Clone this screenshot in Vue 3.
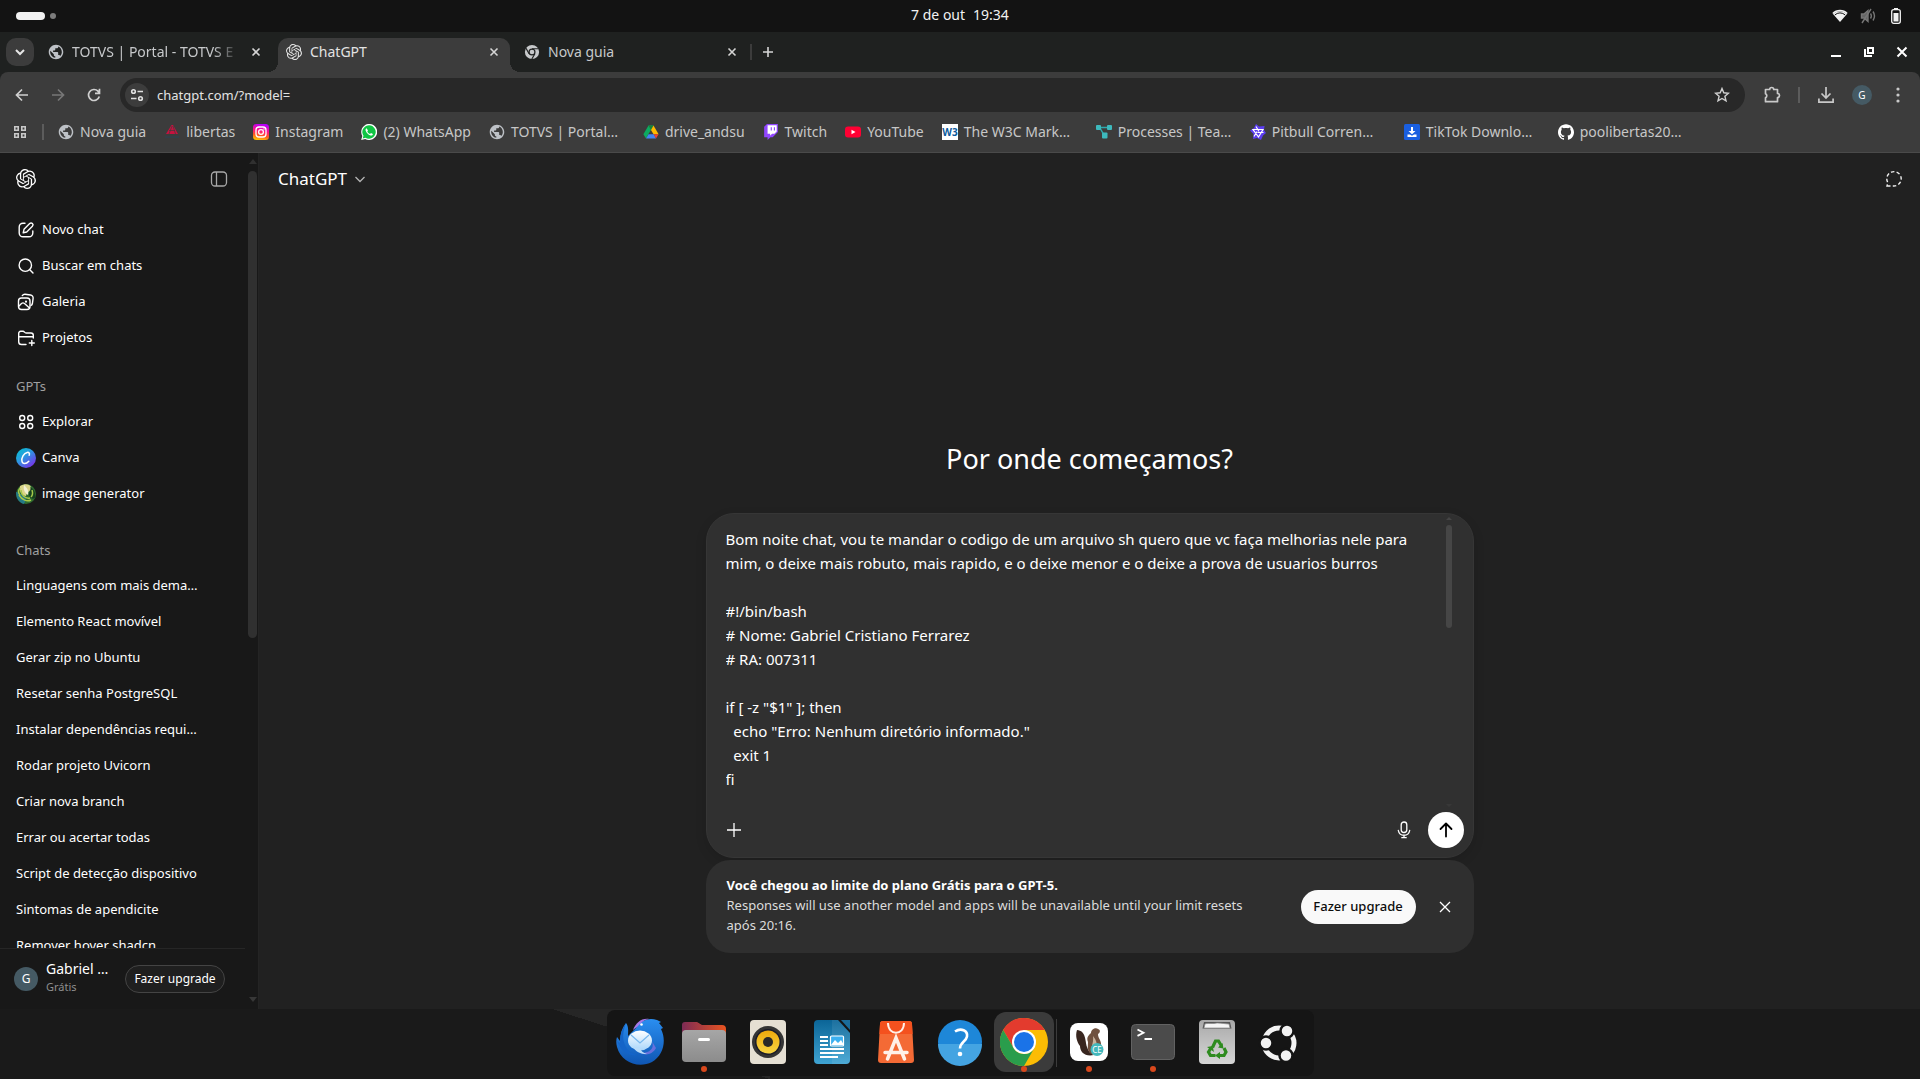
<script setup>
import { ref } from 'vue'

const tabs = [
  { title: 'TOTVS | Portal - TOTVS E', icon: 'globe', cls: 'faded' },
  { title: 'ChatGPT', icon: 'openai', cls: 'active' },
  { title: 'Nova guia', icon: 'chrome-mono', cls: '' },
]

const bookmarks = [
  { title: 'Nova guia', icon: 'globe' },
  { title: 'libertas', icon: 'libertas' },
  { title: 'Instagram', icon: 'instagram' },
  { title: '(2) WhatsApp', icon: 'whatsapp' },
  { title: 'TOTVS | Portal…', icon: 'globe', long: true },
  { title: 'drive_andsu', icon: 'drive' },
  { title: 'Twitch', icon: 'twitch' },
  { title: 'YouTube', icon: 'youtube' },
  { title: 'The W3C Mark…', icon: 'w3', long: true },
  { title: 'Processes | Tea…', icon: 'processes', long: true },
  { title: 'Pitbull Corren…', icon: 'pitbull', long: true },
  { title: 'TikTok Downlo…', icon: 'tiktok', long: true },
  { title: 'poolibertas20…', icon: 'github', long: true },
]

const navItems = [
  { label: 'Novo chat', icon: 'edit' },
  { label: 'Buscar em chats', icon: 'search' },
  { label: 'Galeria', icon: 'gallery' },
  { label: 'Projetos', icon: 'folder-plus' },
]

const gpts = [
  { label: 'Explorar', icon: 'explore' },
  { label: 'Canva', icon: 'canva' },
  { label: 'image generator', icon: 'imagegen' },
]

const chats = [
  'Linguagens com mais dema…',
  'Elemento React movível',
  'Gerar zip no Ubuntu',
  'Resetar senha PostgreSQL',
  'Instalar dependências requi…',
  'Rodar projeto Uvicorn',
  'Criar nova branch',
  'Errar ou acertar todas',
  'Script de detecção dispositivo',
  'Sintomas de apendicite',
  'Remover hover shadcn',
]

const dockLeft = [
  { name: 'Thunderbird', icon: 'thunderbird' },
  { name: 'Arquivos', icon: 'files', running: true },
  { name: 'Rhythmbox', icon: 'rhythmbox' },
  { name: 'LibreOffice Writer', icon: 'writer' },
  { name: 'Central de aplicativos', icon: 'appcenter' },
  { name: 'Ajuda', icon: 'help' },
  { name: 'Google Chrome', icon: 'chrome', running: true, focused: true },
]
const dockRight = [
  { name: 'DBeaver', icon: 'dbeaver', running: true },
  { name: 'Terminal', icon: 'terminal', running: true },
  { name: 'Lixeira', icon: 'trash' },
  { name: 'Mostrar aplicativos', icon: 'ubuntu' },
]

const url = ref('chatgpt.com/?model=')
const prompt = ref(`Bom noite chat, vou te mandar o codigo de um arquivo sh quero que vc faça melhorias nele para mim, o deixe mais robuto, mais rapido, e o deixe menor e o deixe a prova de usuarios burros

#!/bin/bash
# Nome: Gabriel Cristiano Ferrarez
# RA: 007311

if [ -z "$1" ]; then
  echo "Erro: Nenhum diretório informado."
  exit 1
fi`)
</script>

<template>
  <div class="screen">
    <svg class="sprite" width="0" height="0" aria-hidden="true">
      <defs>
        <linearGradient id="g-insta" x1=".3" y1="1" x2=".5" y2="0">
          <stop offset="0" stop-color="#ffc800" /><stop offset=".3" stop-color="#ff5a1f" />
          <stop offset=".6" stop-color="#ff0f8a" /><stop offset="1" stop-color="#b400ff" />
        </linearGradient>
        <linearGradient id="g-canva" x1="0" y1="0" x2=".8" y2="1">
          <stop offset="0" stop-color="#00c4cc" /><stop offset=".45" stop-color="#2a9be0" /><stop offset="1" stop-color="#7d2ae8" />
        </linearGradient>
        <linearGradient id="g-bird" x1="0" y1="0" x2="0" y2="1">
          <stop offset="0" stop-color="#2a8ef0" /><stop offset="1" stop-color="#0f56b3" />
        </linearGradient>
        <linearGradient id="g-mail" x1="0" y1="0" x2="0" y2="1">
          <stop offset="0" stop-color="#ffffff" /><stop offset="1" stop-color="#a9d6fb" />
        </linearGradient>
        <linearGradient id="g-folder" x1="0" y1="0" x2="1" y2="0">
          <stop offset="0" stop-color="#7d2b55" /><stop offset="1" stop-color="#e95420" />
        </linearGradient>
        <linearGradient id="g-gray" x1="0" y1="0" x2="0" y2="1">
          <stop offset="0" stop-color="#a6a6a6" /><stop offset="1" stop-color="#8c8c8c" />
        </linearGradient>
        <linearGradient id="g-yellow" x1="0" y1="0" x2="0" y2="1">
          <stop offset="0" stop-color="#eda90c" /><stop offset="1" stop-color="#f7d442" />
        </linearGradient>
        <linearGradient id="g-writer" x1="0" y1="0" x2="0" y2="1">
          <stop offset="0" stop-color="#0b6597" /><stop offset="1" stop-color="#3fa4d3" />
        </linearGradient>
        <linearGradient id="g-trash" x1="0" y1="0" x2="0" y2="1">
          <stop offset="0" stop-color="#a9a9a9" /><stop offset="1" stop-color="#d6d6d6" />
        </linearGradient>
      </defs>

      <!-- browser -->
      <symbol id="globe" viewBox="1 1 22 22"><path fill="#bdc1c6" d="M12 2C6.480 2 2 6.480 2 12s4.480 10 10 10 10-4.480 10-10S17.520 2 12 2zm-1 17.930c-3.950-.49-7-3.850-7-7.930 0-.62.08-1.210.21-1.790L9 15v1c0 1.100.9 2 2 2v1.930zm6.900-2.540c-.26-.81-1-1.390-1.900-1.390h-1v-3c0-.55-.45-1-1-1H8v-2h2c.55 0 1-.45 1-1V7h2c1.100 0 2-.9 2-2v-.41c2.930 1.190 5 4.060 5 7.410 0 2.080-.8 3.970-2.100 5.390z" /></symbol>
      <symbol id="openai" viewBox="0 0 24 24"><path fill="currentColor" d="M22.2819 9.8211a5.9847 5.9847 0 0 0-.5157-4.9108 6.0462 6.0462 0 0 0-6.5098-2.9A6.0651 6.0651 0 0 0 4.9807 4.1818a5.9847 5.9847 0 0 0-3.9977 2.9 6.0462 6.0462 0 0 0 .7427 7.0966 5.98 5.98 0 0 0 .511 4.9107 6.051 6.051 0 0 0 6.5146 2.9001A5.9847 5.9847 0 0 0 13.2599 24a6.0557 6.0557 0 0 0 5.7718-4.2058 5.9894 5.9894 0 0 0 3.9977-2.9001 6.0557 6.0557 0 0 0-.7475-7.0729zm-9.022 12.6081a4.4755 4.4755 0 0 1-2.8764-1.0408l.1419-.0804 4.7783-2.7582a.7948.7948 0 0 0 .3927-.6813v-6.7369l2.02 1.1686a.071.071 0 0 1 .038.052v5.5826a4.504 4.504 0 0 1-4.4945 4.4944zm-9.6607-4.1254a4.4708 4.4708 0 0 1-.5346-3.0137l.142.0852 4.783 2.7582a.7712.7712 0 0 0 .7806 0l5.8428-3.3685v2.3324a.0804.0804 0 0 1-.0332.0615L9.74 19.9502a4.4992 4.4992 0 0 1-6.1408-1.6464zM2.3408 7.8956a4.485 4.485 0 0 1 2.3655-1.9728V11.6a.7664.7664 0 0 0 .3879.6765l5.8144 3.3543-2.0201 1.1685a.0757.0757 0 0 1-.071 0l-4.8303-2.7865A4.504 4.504 0 0 1 2.3408 7.872zm16.5963 3.8558L13.1038 8.364 15.1192 7.2a.0757.0757 0 0 1 .071 0l4.8303 2.7913a4.4944 4.4944 0 0 1-.6765 8.1042v-5.6772a.79.79 0 0 0-.407-.667zm2.0107-3.0231l-.142-.0852-4.7735-2.7818a.7759.7759 0 0 0-.7854 0L9.409 9.2297V6.8974a.0662.0662 0 0 1 .0284-.0615l4.8303-2.7866a4.4992 4.4992 0 0 1 6.6802 4.66zM8.3065 12.863l-2.02-1.1638a.0804.0804 0 0 1-.038-.0567V6.0742a4.4992 4.4992 0 0 1 7.3757-3.4537l-.142.0805L8.704 5.459a.7948.7948 0 0 0-.3927.6813zm1.0976-2.3654l2.602-1.4998 2.6069 1.4998v2.9994l-2.5974 1.4997-2.6067-1.4997Z" /></symbol>
      <symbol id="chrome-mono" viewBox="-1 -1 18 18"><circle cx="8" cy="8" r="8" fill="#c7c9cb" /><circle cx="8" cy="8" r="4" fill="#1f2120" /><circle cx="8" cy="8" r="2.600" fill="#c7c9cb" /><path d="M8 4.300h7.200M4.700 9.900 1.300 3.800M11.300 9.900 7.800 15.900" stroke="#1f2120" stroke-width="1.300" /></symbol>
      <symbol id="close" viewBox="0 0 16 16"><path d="m4.500 4.500 7 7m0-7-7 7" fill="none" stroke="currentColor" stroke-width="1.600" /></symbol>
      <symbol id="libertas" viewBox="0 0 16 16"><path d="M7.500 1 2 10h12L9 1z" fill="#c5123f" /><path d="m8 2-3 8M9 2l2.500 8M5 6.500h6" stroke="#3c3c3c" stroke-width=".7" /><path d="M1 12h14v2H1z" fill="#2c4350" opacity=".6" /></symbol>
      <symbol id="instagram" viewBox="0 0 16 16"><rect width="16" height="16" rx="3.500" fill="url(#g-insta)" /><rect x="3" y="3" width="10" height="10" rx="3" fill="none" stroke="#fff" stroke-width="1.300" /><circle cx="8" cy="8" r="2.400" fill="none" stroke="#fff" stroke-width="1.300" /><circle cx="11" cy="5" r=".7" fill="#fff" /></symbol>
      <symbol id="whatsapp" viewBox="0 0 16 16"><path d="M.2 16 1.300 12A8 8 0 1 1 4.200 14.900z" fill="#fff" /><path d="m1.700 14.500.8-2.700A6.700 6.700 0 1 1 4.500 13.700z" fill="#10c544" /><path d="M5.600 4.200c-.9.3-1.300 1.500-.9 2.600.7 2 2.400 3.900 4.800 4.700 1.200.3 2.200-.3 2.400-1.500l-1.900-1-1 .9c-1.400-.5-2.200-1.400-2.700-2.500l.7-.9z" fill="#fff" /></symbol>
      <symbol id="drive" viewBox="0 0 16 16"><path d="M5.500 1.500h5L5.800 9.600 3 14.500.4 10.200z" fill="#0da960" /><path d="M5.500 1.500h5L8 6z" fill="#188038" /><path d="M10.500 1.500 15.600 10.200H10.500L8 6z" fill="#ffba00" /><path d="M5.500 10.200h5.300L13 14.500H3z" fill="#4285f4" /><path d="M10.600 10.200h5L13 14.500z" fill="#ea4335" /></symbol>
      <symbol id="twitch" viewBox="0 0 24 24"><path d="M6 1h15v11l-4 4h-4l-3 3v-3H6z" fill="#fff" /><path fill="#9146ff" d="M11.571 4.714h1.715v5.143H11.570zm4.715 0H18v5.143h-1.714zM6 0L1.714 4.286v15.428h5.143V24l4.286-4.286h3.428L22.286 12V0zm14.571 11.143l-3.428 3.428h-3.429l-3 3v-3H6.857V1.714h13.714Z" /></symbol>
      <symbol id="youtube" viewBox="0 0 16 16"><rect y="2.500" width="16" height="11" rx="3" fill="#ff0033" /><path d="m6.500 5.800 4 2.200-4 2.200z" fill="#fff" /></symbol>
      <symbol id="w3" viewBox="0 0 16 16"><rect width="16" height="16" fill="#fff" /><text x="8" y="12" text-anchor="middle" font-family="Noto Sans, sans-serif" font-size="10" font-weight="700" fill="#0a5a9c">W3</text></symbol>
      <symbol id="processes" viewBox="0 0 16 16"><path d="M2.500 3.500h11M4 4l4.500 8" stroke="#2fa9ad" stroke-width="1.500" fill="none" /><rect y="1" width="5" height="5" rx="1" fill="#3db9bd" /><rect x="11" y="1" width="5" height="5" rx="1" fill="#3db9bd" /><rect x="6" y="8.500" width="5.500" height="6" rx="1" fill="#3db9bd" /></symbol>
      <symbol id="pitbull" viewBox="0 0 16 16"><path d="m6 0 3 2.500L14.500 2l-.5 4 2 3-3 2.500L11 16l-4-2-4 1 .5-5L0 6.500 4 4z" fill="#5b3df0" /><path d="M3 5.500h10L8.500 13zM6 2.500l3 5M13.500 8.500H7.500M4 12.500l3-5" fill="none" stroke="#fff" stroke-width="1.200" /></symbol>
      <symbol id="tiktok" viewBox="0 0 16 16"><rect width="16" height="16" rx="1.500" fill="#1a5fe0" /><path d="M7 3h2v4h2.500L8 10.300 4.500 7H7zM3.500 10.500H6l2 1.300 2-1.300h2.500v2.500h-9z" fill="#fff" /></symbol>
      <symbol id="github" viewBox="0 0 24 24"><path fill="#fff" d="M12 .297c-6.630 0-12 5.373-12 12 0 5.303 3.438 9.800 8.205 11.385.6.113.82-.258.82-.577 0-.285-.01-1.040-.015-2.040-3.338.724-4.042-1.610-4.042-1.610C4.422 18.070 3.633 17.700 3.633 17.700c-1.087-.744.084-.729.084-.729 1.205.084 1.838 1.236 1.838 1.236 1.070 1.835 2.809 1.305 3.495.998.108-.776.417-1.305.76-1.605-2.665-.3-5.466-1.332-5.466-5.930 0-1.310.465-2.380 1.235-3.220-.135-.303-.54-1.523.105-3.176 0 0 1.005-.322 3.300 1.230.96-.267 1.980-.399 3-.405 1.020.006 2.040.138 3 .405 2.280-1.552 3.285-1.230 3.285-1.230.645 1.653.24 2.873.12 3.176.765.84 1.230 1.910 1.230 3.220 0 4.610-2.805 5.625-5.475 5.920.42.36.81 1.096.81 2.220 0 1.606-.015 2.896-.015 3.286 0 .315.21.69.825.57C20.565 22.092 24 17.592 24 12.297c0-6.627-5.373-12-12-12" /></symbol>

      <!-- sidebar -->
      <symbol id="edit" viewBox="0 0 20 20"><path class="stroked" d="M9 3.200H7A3.800 3.800 0 0 0 3.200 7v6A3.800 3.800 0 0 0 7 16.800h6a3.800 3.800 0 0 0 3.800-3.800v-2M8 9.300l5.700-5.700a1.900 1.900 0 0 1 2.700 2.700L10.700 12l-3.500.8z" /></symbol>
      <symbol id="search" viewBox="0 0 20 20"><path class="stroked" d="M3.100 9.200a6.200 6.200 0 1 0 12.400 0 6.200 6.200 0 1 0-12.400 0M13.800 13.700l3.200 3.400" /></symbol>
      <symbol id="gallery" viewBox="0 0 20 20"><path class="stroked" d="M6.300 3.600A3 3 0 0 1 9 2.200l5.500.8a3 3 0 0 1 2.600 3.400l-.7 5.100a3 3 0 0 1-1.400 2" /><rect class="stroked" x="2.500" y="6" width="11.500" height="11.500" rx="3" /><path class="stroked" d="m3 14 2.500-2.500c1-.8 2-.8 3 0l5 4.500" /><circle cx="10" cy="9.700" r="1.100" fill="currentColor" /></symbol>
      <symbol id="folder-plus" viewBox="0 0 20 20"><path class="stroked" d="M10 16.500H5.500A2.800 2.800 0 0 1 2.700 13.700V5.500A2 2 0 0 1 4.700 3.300H7c1.500 0 1.500 1.700 3 1.700h5a2.300 2.300 0 0 1 2.300 2.300V10M2.700 8.700h14.600M15.800 12.500v5M13.300 15h5" /></symbol>
      <symbol id="explore" viewBox="0 0 20 20"><g class="stroked"><circle cx="6.200" cy="6" r="2.500" /><circle cx="14.200" cy="6" r="2.500" /><circle cx="6.200" cy="14" r="2.500" /><circle cx="14.200" cy="14" r="2.500" /></g></symbol>
      <symbol id="canva" viewBox="0 0 20 20"><circle cx="10" cy="10" r="10" fill="url(#g-canva)" /><path d="M13.200 7.200c.8-1.800-.3-3.200-2-2.800-3.500.8-6 5.500-5.200 8.900.6 2.800 4 3 6.800-.1" fill="none" stroke="#fff" stroke-width="1.500" stroke-linecap="round" /></symbol>
      <symbol id="imagegen" viewBox="0 0 20 20"><circle cx="10" cy="10" r="10" fill="#2f6b2f" /><path d="M4 2C9-1 14 0 15 3c0 5-4 4-5 9-4-1-7-3-6-10z" fill="#d9d489" /><path d="M8 1c3 3 5 5 4 10-3-2-5-5-4-10z" fill="#f2f0d4" /><path d="M0 8c3 0 5 3 9 5 2 2 0 5-1 7C3 19 0 14 0 8z" fill="#247a86" /><path d="M14 3c4 2 6 6 5 11-3 2-6-1-6-4s3-3 1-7z" fill="#16401f" /><path d="M5 6c0 5 4 9 9 8M3 11c3 5 8 7 12 5M4 4c-2 3-2 5 0 7M16 6c1 3 1 5-1 7" stroke="#a7c84a" stroke-width="1.500" fill="none" /></symbol>

      <!-- dock -->
      <symbol id="thunderbird" viewBox="0 0 48 48">
        <path d="M10 5c3 4 2 9 2 13l8-8C24 3 32-1 41 2l4 2-2 1 4 5-2 1c6 12 2 27-9 33C22 51 5 44 1 29c-1-4-1-7 0-10l3 4C4 16 6 10 10 5z" fill="url(#g-bird)" />
        <path d="M10 5c-3 8-4 15-1 22 2 6 7 9 13 10C13 39 5 33 1 23l3 2c0-8 2-14 6-20z" fill="#1464c8" />
        <path d="M17 12c3-7 8-12 16-11-6 1-8 4-12 8z" fill="#a678e8" />
        <path d="M34 20c6 8 2 15-9 15 5 3 12 1 15-5z" fill="#6870dc" />
        <ellipse cx="24" cy="22.500" rx="12" ry="10" fill="url(#g-mail)" /><path d="m15 17 9 8 9-8" fill="none" stroke="#78b8ee" stroke-width="1.300" /><path d="M18 30c2 4 7 6 13 6-4-1-6-3-7-6z" fill="#b9dcfa" /><circle cx="25.500" cy="6.500" r="1.300" fill="#fff" />
      </symbol>
      <symbol id="files" viewBox="0 0 48 48"><path d="M2 16V7a3 3 0 0 1 3-3h12l5 3h20a4 4 0 0 1 4 4v9H2z" fill="url(#g-folder)" /><rect x="2" y="12" width="44" height="32" rx="4" fill="url(#g-gray)" /><rect x="18" y="20" width="12" height="3" rx="1.500" fill="#fff" /></symbol>
      <symbol id="rhythmbox" viewBox="0 0 48 48"><rect x="6" y="2" width="36" height="44" rx="4" fill="#e5dfd3" /><circle cx="24" cy="24" r="16" fill="#343434" /><circle cx="24" cy="24" r="13" fill="#1b1c29" /><circle cx="24" cy="24" r="11.500" fill="url(#g-yellow)" /><circle cx="24" cy="24" r="5" fill="#282828" /></symbol>
      <symbol id="writer" viewBox="0 0 48 48"><path d="M10 2h20l12 13v27a4 4 0 0 1-4 4H10a4 4 0 0 1-4-4V6a4 4 0 0 1 4-4z" fill="url(#g-writer)" /><path d="M24 2h6l12 13v27a4 4 0 0 1-4 4H24z" fill="#fff" opacity=".08" /><path d="M33 2h9v10z" fill="#1a6c9a" /><path d="M12 19h8M12 23h8M12 27h8M12 31h24M12 35h24M12 39h18" stroke="#fff" stroke-width="2" /><rect x="22.500" y="18" width="13" height="10" rx="1" fill="#3bb0f0" stroke="#fff" stroke-width="1.200" /><path d="m23 27 4-5 3 3 3-3 3 5z" fill="#fff" /></symbol>
      <symbol id="appcenter" viewBox="0 0 48 48"><path d="M8 6a3 3 0 0 1 3-3h26a3 3 0 0 1 3 3l2 36a3 3 0 0 1-3 3H9a3 3 0 0 1-3-3z" fill="#f46a35" /><path d="M8 6a3 3 0 0 1 3-3h26a3 3 0 0 1 3 3l.6 10H7.400z" fill="#f4511e" /><path d="M16 5c0 13 16 13 16 0" fill="none" stroke="#fff0e8" stroke-width="2" /><path d="M15.500 41 24 20l8.500 21M13 34.500h22" fill="none" stroke="#fff0e8" stroke-width="3.500" stroke-linecap="round" /></symbol>
      <symbol id="help" viewBox="0 0 48 48"><circle cx="24" cy="24" r="22" fill="#1e87d8" /><path d="M2 26a22 22 0 0 0 44 0z" fill="#44a4e2" /><path d="M19 13.500c6-4 13-1 12 5-.8 5-7 5.500-7 12" fill="none" stroke="#fff" stroke-width="2.600" /><circle cx="24" cy="36" r="2.300" fill="#fff" /></symbol>
      <symbol id="chrome" viewBox="0 0 48 48"><circle cx="24" cy="24" r="24" fill="#fbbc04" /><path d="M3.200 12A24 24 0 0 1 44.800 12H24L13.600 30z" fill="#e33b2e" /><path d="M3.200 12A24 24 0 0 0 24 48L34.400 30A12 12 0 0 1 13.600 30z" fill="#2a9d4c" /><circle cx="24" cy="24" r="12" fill="#fff" /><circle cx="24" cy="24" r="10" fill="#1a73e8" /></symbol>
      <symbol id="dbeaver" viewBox="0 0 48 48"><rect x="5" y="5" width="38" height="38" rx="8" fill="#fff" /><path d="M12 12c9 1 8 10 10 17 1 4 4 7 7 8-9 2-14-3-14-9-3-4-5-10-3-16z" fill="#38261f" /><path d="M23 24c-2-5 1-7 3-9 0-4 5-6 7-4 3 1 2 4 0 5 0 5 4 6 3 13-1 6-8 9-11 6-3-3-2-7-2-11z" fill="#70513f" /><path d="M28 18c2 3 5 6 3 12l-4 5c-2-6 2-9 1-17z" fill="#c9b39c" /><circle cx="32" cy="31.500" r="6.500" fill="#43b8bc" /><text x="32" y="34.500" text-anchor="middle" font-family="Noto Sans, sans-serif" font-size="8" fill="#fff">CE</text></symbol>
      <symbol id="terminal" viewBox="0 0 48 48"><rect x="2.500" y="6.500" width="43" height="35" rx="4" fill="#4b4b4b" stroke="#626262" /><path d="m8.500 11.500 6 3.200-6 3.200M15.500 21H23" fill="none" stroke="#fff" stroke-width="1.800" /></symbol>
      <symbol id="trash" viewBox="0 0 48 48"><rect x="6" y="2" width="36" height="44" rx="4" fill="url(#g-trash)" /><path d="M11 4h26l1.500 6.500h-29z" fill="#555" /><path d="m11 10 1-4c1-1 9 0 12-1 5 0 9 1 12 1l1 4z" fill="#f5f5f5" stroke="#8a8a8a" stroke-width=".7" /><g fill="none" stroke="#2e8b1f" stroke-width="3.200"><path d="m19.500 29.500 3-6.500h3l3 5" /><path d="m31 30 2 4-2 3.500h-5" /><path d="M22.500 37.500h-5l-2-3.500 2.500-4" /></g><path d="m30.500 30.500-5.500-1 4.500-4.500zM27 34v7l-5-3.500zM14 29l5.500-1 1.500 6z" fill="#2e8b1f" /></symbol>
      <symbol id="ubuntu" viewBox="2 -1 48 48"><circle cx="24" cy="24" r="15" fill="none" stroke="#f3f3f3" stroke-width="5" /><g fill="#f3f3f3" stroke="#151515" stroke-width="2.500"><circle cx="11" cy="24" r="6.500" /><circle cx="32" cy="12" r="6.500" /><circle cx="31" cy="36.500" r="6.500" /></g></symbol>
    </svg>

    <header class="topbar">
      <button class="activities" aria-label="Atividades"><span class="pill"></span><span class="dot"></span></button>
      <div class="clock"><span>7 de out</span><span>19:34</span></div>
      <div class="status">
        <svg width="16" height="16" viewBox="0 0 16 16"><path d="M1 6a10 10 0 0 1 14 0L8 14z" fill="#f2f2f2" /><path d="M.8 5.500a10 10 0 0 1 14.400 0" fill="none" stroke="#f2f2f2" stroke-width="1.400" /><path d="M2.800 7a7.500 7.500 0 0 1 10.400 0" fill="none" stroke="#131313" stroke-width="1" /></svg>
        <svg width="16" height="16" viewBox="0 0 16 16" fill="none" stroke="#777" stroke-width="1.400"><path d="M1.500 6H4l4-3.500v11L4 10H1.500z" fill="#666" /><path d="m2 15 9-14M10.500 5.500q1.600 2.500 0 5M13 3.500q3 4.500 0 9" /></svg>
        <svg width="16" height="16" viewBox="0 0 16 16"><path d="M6 0h4v2H6z" fill="#f2f2f2" /><rect x="3.700" y="1.700" width="8.600" height="13.600" rx="2" fill="none" stroke="#f2f2f2" stroke-width="1.300" /><rect x="5.500" y="5" width="5" height="8.500" fill="#f2f2f2" /></svg>
      </div>
    </header>

    <div class="tabstrip">
      <button class="tab-search" aria-label="Pesquisar guias"><svg width="12" height="12" viewBox="0 0 12 12"><path d="m2 4 4 4 4-4" fill="none" stroke="#e6e6e6" stroke-width="2" /></svg></button>
      <div v-for="t in tabs" :key="t.title" class="tab" :class="t.cls">
        <svg class="ic16"><use :href="'#' + t.icon" /></svg>
        <span class="tab-title">{{ t.title }}</span>
        <button class="tab-close" aria-label="Fechar guia"><svg class="ic16"><use href="#close" /></svg></button>
      </div>
      <span class="tab-sep"></span>
      <button class="new-tab" aria-label="Nova guia"><svg width="12" height="12" viewBox="0 0 12 12"><path d="M6 1v10M1 6h10" stroke="#d5d5d5" stroke-width="1.600" /></svg></button>
      <div class="win-controls">
        <button aria-label="Minimizar"><svg class="ic16" viewBox="0 0 16 16"><path d="M3 12h10" stroke="#fff" stroke-width="2" /></svg></button>
        <button aria-label="Restaurar"><svg class="ic16" viewBox="0 0 16 16" fill="none" stroke="#fff" stroke-width="2"><path d="M7 4h5v5H7zM4 5v7h7" /></svg></button>
        <button aria-label="Fechar"><svg class="ic16" viewBox="0 0 16 16"><path d="m3.500 3.500 9 9m0-9-9 9" stroke="#fff" stroke-width="2" /></svg></button>
      </div>
    </div>

    <div class="toolbar">
      <div class="nav-buttons">
        <button aria-label="Voltar"><svg class="ic16" viewBox="0 0 16 16" fill="none" stroke="#d0d0d0" stroke-width="1.700"><path d="M14 8H3M8 2.500 2.500 8 8 13.500" /></svg></button>
        <button aria-label="Avançar"><svg class="ic16" viewBox="0 0 16 16" fill="none" stroke="#777" stroke-width="1.700"><path d="M2 8h11M8 2.500 13.500 8 8 13.500" /></svg></button>
        <button aria-label="Recarregar"><svg class="ic16" viewBox="0 0 16 16" fill="none" stroke="#d0d0d0" stroke-width="1.700"><path d="M13.300 9.500A5.500 5.500 0 1 1 12 4.200l1.300 1.600M13.500 1.800v4.500H9" /></svg></button>
      </div>
      <div class="omnibox">
        <button class="site-info" aria-label="Ver informações do site"><svg class="ic16" viewBox="0 0 16 16" fill="none" stroke="#e0e0e0" stroke-width="1.600"><circle cx="4.500" cy="4.500" r="1.800" /><path d="M8.500 4.500H14M2 11.500h5.500" /><circle cx="11.500" cy="11.500" r="1.800" /></svg></button>
        <input v-model="url" class="url" type="text" aria-label="Barra de endereço" />
        <button aria-label="Favoritar"><svg class="ic16" viewBox="0 0 16 16"><path d="m8 1.500 1.800 4.300 4.700.4-3.600 3.100 1.100 4.600L8 11.500l-4 2.400 1.100-4.600-3.600-3.100 4.700-.4z" fill="none" stroke="#d0d0d0" stroke-width="1.400" /></svg></button>
      </div>
      <div class="tools">
        <button aria-label="Extensões"><svg width="18" height="18" viewBox="0 0 18 18"><path d="M2.500 3.500h4.200a2 2 0 0 1 4 0h3.800v4a2 2 0 0 1 0 4v4.200h-12v-4a2.200 2.200 0 0 0 0-4z" fill="none" stroke="#c9c9c9" stroke-width="1.700" stroke-linejoin="round" /></svg></button>
        <span class="tool-sep"></span>
        <button aria-label="Downloads"><svg width="18" height="18" viewBox="0 0 18 18" fill="none" stroke="#c9c9c9" stroke-width="1.700"><path d="M9 1v10.500M4.500 7.500 9 12l4.500-4.500M1.900 12.500v3.600h14.200v-3.600" /></svg></button>
        <button class="profile" aria-label="Perfil">G</button>
        <button aria-label="Menu"><svg width="18" height="18" viewBox="0 0 18 18" fill="#c9c9c9"><circle cx="9" cy="3" r="1.600" /><circle cx="9" cy="9" r="1.600" /><circle cx="9" cy="15" r="1.600" /></svg></button>
      </div>
    </div>

    <nav class="bookmarks">
      <button class="apps" aria-label="Aplicativos"><svg class="ic16" viewBox="0 0 16 16" fill="none" stroke="#c9c9c9" stroke-width="1.600"><path d="M2.800 2.800h3.400v3.400H2.800zM9.800 2.800h3.400v3.400H9.800zM2.800 9.800h3.400v3.400H2.800zM9.800 9.800h3.400v3.400H9.800z" /></svg></button>
      <span class="bm-sep"></span>
      <a v-for="(b, i) in bookmarks" :key="i" class="bookmark" :class="{ long: b.long }" href="#">
        <svg class="ic16"><use :href="'#' + b.icon" /></svg><span>{{ b.title }}</span>
      </a>
    </nav>

    <div class="page">
      <aside class="sidebar">
        <div class="side-main">
          <div class="side-scroll">
            <div class="side-head">
              <a href="#" class="brand" aria-label="ChatGPT"><svg class="ic20"><use href="#openai" /></svg></a>
              <button aria-label="Fechar barra lateral"><svg class="ic20" viewBox="0 0 20 20" fill="none" stroke="#a8a8a8" stroke-width="1.300"><rect x="2.500" y="3" width="15" height="14" rx="3.500" /><path d="M7.500 3v14" /></svg></button>
            </div>
            <a v-for="n in navItems" :key="n.label" class="side-item" href="#"><svg class="ic20"><use :href="'#' + n.icon" /></svg><span>{{ n.label }}</span></a>
            <h2 class="side-label gpts">GPTs</h2>
            <a v-for="g in gpts" :key="g.label" class="side-item" href="#"><svg class="ic20"><use :href="'#' + g.icon" /></svg><span>{{ g.label }}</span></a>
            <h2 class="side-label chats">Chats</h2>
            <a v-for="c in chats" :key="c" class="side-item" href="#"><span>{{ c }}</span></a>
          </div>
          <div class="account">
            <span class="avatar">G</span>
            <div class="who"><span class="name">Gabriel …</span><span class="plan">Grátis</span></div>
            <button class="upgrade-sm">Fazer upgrade</button>
          </div>
        </div>
        <div class="scrollbar" aria-hidden="true"><i class="up"></i><i class="thumb"></i><i class="down"></i></div>
      </aside>

      <main class="main">
        <div class="main-head">
          <button class="model">ChatGPT<svg width="12" height="12" viewBox="0 0 12 12"><path d="m1.500 4 4.500 4.500L10.500 4" fill="none" stroke="#b4b4b4" stroke-width="1.300" /></svg></button>
          <button class="temp" aria-label="Chat temporário"><svg class="ic20" viewBox="0 0 20 20"><path d="M3 17h7A7.200 7.200 0 1 0 3.800 13.500z" fill="none" stroke="#f0f0f0" stroke-width="1.400" stroke-dasharray="3.500 2.300" /></svg></button>
        </div>
        <div class="center">
          <h1>Por onde começamos?</h1>
          <form class="composer" @submit.prevent>
            <div class="text-row">
              <textarea v-model="prompt" rows="11" aria-label="Mensagem"></textarea>
              <div class="scrollbar thin" aria-hidden="true"><i class="up"></i><i class="thumb"></i><i class="down"></i></div>
            </div>
            <div class="composer-actions">
              <button type="button" class="round" aria-label="Adicionar"><svg class="ic20" viewBox="0 0 20 20"><path d="M10 3v14M3 10h14" stroke="#fff" stroke-width="1.300" /></svg></button>
              <span class="spacer"></span>
              <button type="button" class="round" aria-label="Ditar"><svg class="ic20" viewBox="0 0 20 20" fill="none" stroke="#fff" stroke-width="1.300" stroke-linecap="round"><rect x="7.200" y="2" width="5.600" height="10.500" rx="2.800" /><path d="M4.300 10.500a5.800 5.800 0 0 0 11.400 0M10 15.400v2.300M7.800 17.700h4.400" /></svg></button>
              <button type="submit" class="round send" aria-label="Enviar"><svg class="ic20" viewBox="0 0 20 20" fill="none" stroke="#000" stroke-width="1.800" stroke-linecap="round" stroke-linejoin="round"><path d="M10 16.500v-13M4.500 9 10 3.500 15.500 9" /></svg></button>
            </div>
          </form>
          <section class="banner">
            <div class="banner-text">
              <strong>Você chegou ao limite do plano Grátis para o GPT-5.</strong>
              <p>Responses will use another model and apps will be unavailable until your limit resets após 20:16.</p>
            </div>
            <button class="upgrade"><span>Fazer upgrade</span></button>
            <button class="dismiss" aria-label="Fechar aviso"><svg class="ic20" viewBox="0 0 20 20"><path d="m5 5 10 10m0-10L5 15" stroke="#fff" stroke-width="1.300" /></svg></button>
          </section>
        </div>
      </main>
    </div>

    <footer class="desktop">
      <div class="dock">
        <button v-for="d in dockLeft" :key="d.name" class="app" :class="{ running: d.running, focused: d.focused }" :aria-label="d.name"><svg class="ic48"><use :href="'#' + d.icon" /></svg></button>
        <span class="dock-sep"></span>
        <button v-for="d in dockRight" :key="d.name" class="app" :class="{ running: d.running }" :aria-label="d.name"><svg class="ic48"><use :href="'#' + d.icon" /></svg></button>
      </div>
    </footer>
  </div>
</template>

<style>
body { background: #1a1a1a; }
</style>

<style scoped>
* { box-sizing: border-box; }
.screen { display: flex; flex-direction: column; height: 100vh; overflow: hidden; font: 14px/20px "Noto Sans", "Open Sans", sans-serif; color: #fff; }
.sprite { position: absolute; }
.stroked { fill: none; stroke: currentColor; stroke-width: 1.4; stroke-linecap: round; stroke-linejoin: round; }
button { display: flex; align-items: center; justify-content: center; padding: 0; border: 0; background: none; color: inherit; font: inherit; }
a { color: inherit; text-decoration: none; }
svg { display: block; flex: none; }
.ic16 { width: 16px; height: 16px; }
.ic20 { width: 20px; height: 20px; }
.ic48 { width: 48px; height: 48px; }

.topbar { flex: none; display: grid; grid-template-columns: 1fr auto 1fr; align-items: center; height: 32px; padding: 0 16px; background: #131313; color: #f2f2f2; }
.activities { justify-self: start; gap: 5px; }
.pill { width: 29px; height: 8px; border-radius: 4px; background: #f2f2f2; }
.dot { width: 6px; height: 6px; border-radius: 3px; background: #7d7d7d; }
.clock { display: flex; gap: 8px; padding-bottom: 2px; }
.status { justify-self: end; display: flex; gap: 12px; }

.tabstrip { flex: none; display: flex; align-items: flex-start; height: 40px; padding: 6px 6px 0; background: #1f2120; }
.tab-search { width: 28px; height: 28px; border-radius: 10px; background: #3c3c3c; }
.tab { position: relative; display: flex; align-items: center; gap: 8px; width: 232px; height: 34px; margin-left: 6px; padding: 0 8px 6px; color: #c7c9cb; }
.tab-title { flex: 1; min-width: 0; overflow: hidden; white-space: nowrap; }
.faded .tab-title { -webkit-mask-image: linear-gradient(to right, #000 84%, transparent); mask-image: linear-gradient(to right, #000 84%, transparent); }
.tab-close { color: #d5d5d5; }
.active { border-radius: 10px 10px 0 0; background: #3c3c3c; color: #e3e3e3; }
.active::before, .active::after { content: ""; position: absolute; bottom: 0; width: 10px; height: 10px; }
.active::before { left: -10px; background: radial-gradient(circle at 0 0, transparent 10px, #3c3c3c 10px); }
.active::after { right: -10px; background: radial-gradient(circle at 100% 0, transparent 10px, #3c3c3c 10px); }
.tab-sep { width: 2px; height: 16px; margin: 6px 0 0 2px; background: #3c3c3c; }
.new-tab { width: 28px; height: 28px; margin-left: 2px; }
.win-controls { display: flex; gap: 17px; margin-left: auto; padding: 6px 4px 0; }

.toolbar { flex: none; display: flex; align-items: center; gap: 18px; height: 46px; padding: 0 13px 0 14px; border-radius: 8px 8px 0 0; background: #3c3c3c; box-shadow: 0 -8px #1f2120; clip-path: inset(0); }
.nav-buttons { display: flex; gap: 20px; }
.omnibox { flex: 1; display: flex; align-items: center; gap: 8px; height: 34px; padding: 0 15px 0 5px; border-radius: 17px; background: #282828; }
.site-info { width: 24px; height: 24px; border-radius: 12px; background: #3c3c3c; }
.url { flex: 1; min-width: 0; padding: 0; border: 0; outline: 0; background: none; color: #e3e3e3; font: inherit; font-size: 13px; }
.tools { display: flex; align-items: center; gap: 17px; }
.tool-sep { width: 2px; height: 16px; background: #5c5c5c; }
.profile { width: 20px; height: 20px; border-radius: 10px; background: #455a64; color: #fff; font-size: 10px; }

.bookmarks { flex: none; display: flex; align-items: center; height: 35px; padding: 0 12px 7px; border-bottom: 1px solid #4a4a4a; background: #3c3c3c; color: #c7c7c7; }
.bm-sep { width: 2px; height: 16px; margin: 0 14px; background: #5c5c5c; }
.bookmark { display: flex; align-items: center; gap: 6px; margin-right: 18px; white-space: nowrap; }
.long { width: 138px; margin-right: 16px; }

.page { flex: 1; display: flex; min-height: 0; background: #212121; }
.sidebar { flex: none; display: flex; width: 259px; background: #181818; border-right: 1px solid #242424; font-size: 13px; }
.side-main { flex: 1; display: flex; flex-direction: column; min-width: 0; }
.side-scroll { flex: 1; min-height: 0; overflow: hidden; }
.side-head { display: flex; align-items: center; justify-content: space-between; height: 52px; margin-bottom: 7px; padding: 0 19px 0 16px; }
.side-item { display: flex; align-items: center; gap: 6px; height: 36px; padding-left: 16px; white-space: nowrap; }
.side-item span { padding-bottom: 2px; }
.side-label { margin: 0; padding-left: 16px; height: 36px; font-size: 13px; line-height: 36px; font-weight: 400; color: #a0a0a0; }
.gpts { margin-top: 12px; }
.chats { margin-top: 20px; }
.account { flex: none; display: flex; align-items: center; height: 61px; margin-right: 3px; padding: 0 20px 0 14px; border-top: 1px solid #262626; }
.avatar { width: 24px; height: 24px; border-radius: 12px; background: #455a64; font-size: 12px; line-height: 24px; text-align: center; }
.who { flex: 1; display: flex; flex-direction: column; margin-left: 8px; padding-bottom: 2px; }
.name { font-size: 14px; line-height: 18px; }
.plan { color: #8f8f8f; font-size: 11px; line-height: 18px; }
.upgrade-sm { width: 100px; height: 28px; border: 1px solid #444; border-radius: 14px; background: #1f1f1f; font-size: 12px; }

.scrollbar { flex: none; display: flex; flex-direction: column; align-items: center; width: 9px; margin-right: 1px; padding: 6px 0 7px; }
.scrollbar i { display: block; }
.up { border: 4px solid transparent; border-top: 0; border-bottom: 5px solid #303030; }
.down { margin-top: auto; border: 4px solid transparent; border-bottom: 0; border-top: 5px solid #383838; }
.thumb { width: 9px; height: 467px; margin-top: 7px; border-radius: 5px; background: #303030; }
.thin { width: 6px; margin: 0; padding: 0; }
.thin .up { border-width: 0 3px 3px; border-bottom-color: #454545; }
.thin .down { border-width: 3px 3px 0; }
.thin .thumb { width: 6px; height: 103px; margin-top: 5px; border-radius: 3px; background: #464646; }

.main { flex: 1; display: flex; flex-direction: column; min-width: 0; }
.main-head { display: flex; align-items: center; justify-content: space-between; height: 52px; padding: 0 16px 0 19px; }
.model { gap: 7px; font-size: 17px; line-height: 28px; }
.center { width: 768px; max-width: 100%; margin: 0 auto; padding-top: 233px; }
h1 { margin: 0 0 33px; font-size: 27px; line-height: 42px; font-weight: 400; text-align: center; }
.composer { border: 1px solid #363636; border-radius: 28px; background: #303030; box-shadow: 0 4px 12px rgba(0, 0, 0, .12); }
.text-row { display: flex; height: 293px; padding: 3px 21px 0 19px; }
textarea { flex: 1; min-width: 0; height: 276px; margin: 10px 12px 0 0; padding: 0; border: 0; outline: 0; resize: none; overflow: hidden; background: none; color: #fff; font: 15px/24px "Noto Sans", "Open Sans", sans-serif; }
.composer-actions { display: flex; align-items: center; gap: 6px; height: 50px; padding: 0 9px 4px; }
.spacer { flex: 1; }
.round { width: 36px; height: 36px; border-radius: 18px; }
.send { background: #fff; }
.banner { display: flex; align-items: center; height: 93px; margin-top: 2px; padding: 0 19px 0 21px; border-radius: 24px; background: #2f2f2f; }
.banner-text { flex: 1; margin-right: 40px; padding-bottom: 3px; font-size: 13px; }
.banner-text p { margin: 0; color: #dcdcdc; }
.upgrade { width: 115px; height: 34px; border-radius: 17px; background: #f9f9f9; color: #0d0d0d; font-size: 13px; font-weight: 500; }
.upgrade span { padding-bottom: 2px; }
.dismiss { margin-left: 19px; }

.desktop { flex: none; display: flex; justify-content: center; height: 70px; padding: 1px 0 3px; background: linear-gradient(to top right, #1a1a1a 50%, #262626 50%) 552px 0 / 218px 70px no-repeat, #1a1a1a; }
.dock { display: flex; align-items: center; height: 66px; padding: 0 1px; border-radius: 8px; background: #151515; }
.app { position: relative; width: 64px; height: 66px; padding-bottom: 2px; }
.focused::before { content: ""; position: absolute; inset: 2px 2px 4px; border-radius: 12px; background: #3b3b3b; }
.app svg { position: relative; }
.running::after { content: ""; position: absolute; left: 29px; bottom: 4px; width: 6px; height: 6px; border-radius: 3px; background: #d9481c; }
.dock-sep { width: 1px; height: 48px; background: #3c3c3c; }
</style>
